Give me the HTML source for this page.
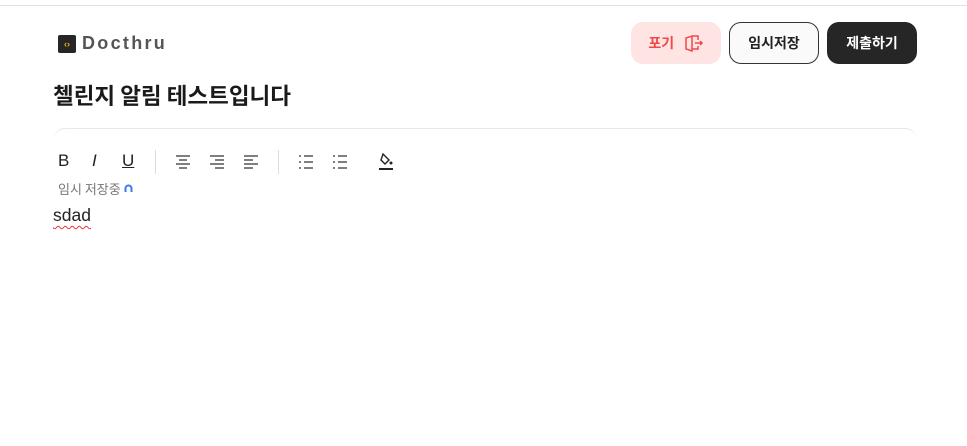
<!DOCTYPE html>
<html><head><meta charset="utf-8"><style>
*{margin:0;padding:0;box-sizing:border-box}
body{width:967px;height:446px;background:#fff;font-family:"Liberation Sans","Noto Sans CJK KR",sans-serif;position:relative;overflow:hidden;color:#222}
.topline{position:absolute;left:0;top:5px;width:967px;height:1px;background:#e2e2e2}
.logo{position:absolute;left:58px;top:33px;display:flex;align-items:center}
.logo .ic{width:18px;height:18px;background:#262626;border-radius:2px;color:#f5b400;font-size:9px;font-weight:bold;display:flex;align-items:center;justify-content:center}
.logo span{margin-left:6px;font-size:18px;font-weight:bold;color:#555;letter-spacing:2.3px;font-family:"Liberation Sans",sans-serif}
h1{position:absolute;left:53px;top:79px;font-size:22.5px;font-weight:bold;color:#1a1a1a;font-family:"Noto Sans CJK KR",sans-serif;line-height:32px}
.btn{position:absolute;top:22px;height:42px;border-radius:12px;font-size:14px;font-weight:bold;display:flex;align-items:center;justify-content:center;font-family:"Noto Sans CJK KR",sans-serif}
.b1{left:631px;width:90px;background:#ffe4e4;color:#f04848}
.b2{left:729px;width:90px;background:#fafafa;border:1px solid #333;color:#222}
.b3{left:827px;width:90px;background:#262626;color:#fff}
.card{position:absolute;left:53px;top:128px;width:864px;height:40px;border-top:1px solid #e8e8e8;border-radius:12px 12px 0 0}
.tb{position:absolute;top:151px;font-size:17px;color:#222}
.sep{position:absolute;top:150px;width:1px;height:24px;background:#ddd}
.saving{position:absolute;left:58px;top:179px;font-size:13px;color:#777;font-family:"Noto Sans CJK KR",sans-serif;display:flex;align-items:center}
.text{position:absolute;left:53px;top:205px;font-size:17.5px;color:#222;text-decoration:underline wavy #e33;text-decoration-thickness:1px;text-underline-offset:4px}
</style></head><body>
<div class="topline"></div>
<div class="logo"><div class="ic">‹›</div><span>Docthru</span></div>
<h1>첼린지 알림 테스트입니다</h1>
<div class="btn b1">포기&nbsp;&nbsp;&nbsp;<svg width="20" height="18" viewBox="0 0 20 18" fill="none" stroke="#f04848" stroke-width="1.5"><path d="M2 4v11l6 2V2L2 4zM8 2h6v4M14 12v3H8M11 9h7M16 7l2 2-2 2"/></svg></div>
<div class="btn b2">임시저장</div>
<div class="btn b3">제출하기</div>
<div class="card"></div>
<div class="tb" style="left:58px">B</div>
<div class="tb" style="left:92px;font-style:italic">I</div>
<div class="tb" style="left:122px;text-decoration:underline">U</div>
<div class="sep" style="left:155px"></div>
<svg class="tb" style="left:175px;top:155px" width="16" height="14" stroke="#333" stroke-width="1.3"><path d="M1 1h14M4 5h8M1 9h14M4 13h8"/></svg>
<svg class="tb" style="left:209px;top:155px" width="16" height="14" stroke="#333" stroke-width="1.3"><path d="M1 1h14M6 5h9M1 9h14M6 13h9"/></svg>
<svg class="tb" style="left:243px;top:155px" width="16" height="14" stroke="#333" stroke-width="1.3"><path d="M1 1h14M1 5h9M1 9h14M1 13h9"/></svg>
<div class="sep" style="left:278px"></div>
<svg class="tb" style="left:298px;top:155px" width="16" height="14" stroke="#333" stroke-width="1.3"><path d="M1 1h2M6 1h9M1 7h2M6 7h9M1 13h2M6 13h9"/></svg>
<svg class="tb" style="left:332px;top:155px" width="16" height="14" stroke="#333" stroke-width="1.3"><path d="M1 1h2M6 1h9M1 7h2M6 7h9M1 13h2M6 13h9"/></svg>
<svg class="tb" style="left:378px;top:152px" width="16" height="20"><path d="M5 2l6 6-4 4-4-4z" fill="none" stroke="#222" stroke-width="1.4"/><circle cx="13" cy="11" r="1.5" fill="#222"/><rect x="1" y="16" width="14" height="2" fill="#222"/></svg>
<div class="saving">임시 저장중&nbsp;<svg width="9" height="9" viewBox="0 0 9 9"><path d="M1.5 8V4.5a3 3 0 0 1 6 0V8" fill="none" stroke="#3a7bf0" stroke-width="2"/></svg></div>
<div class="text">sdad</div>
</body></html>
